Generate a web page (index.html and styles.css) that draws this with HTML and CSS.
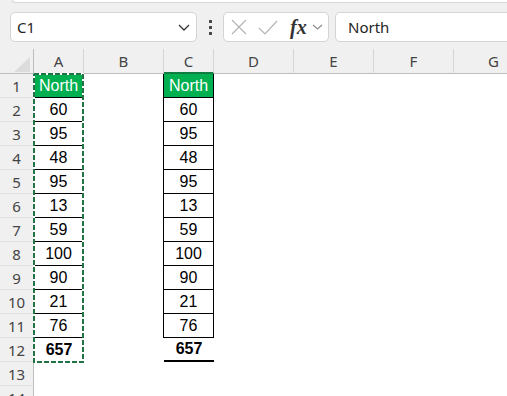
FILE: index.html
```html
<!DOCTYPE html>
<html lang="en">

<head>
  <meta charset="UTF-8" />
  <meta name="viewport" content="width=device-width, initial-scale=1.0" />
  <title>Sheet</title>
  <link rel="stylesheet" href="styles.css">
</head>

<body>

  <div class="ribbon-edge"></div>

  <!-- Name box + formula bar -->
  <div class="formula-bar">
    <div class="name-box">
      <span>C1</span>
      <svg class="chev" width="12" height="7" viewBox="0 0 12 7">
        <polyline points="1,1 6,6 11,1" />
      </svg>
    </div>
    <div class="grip"><i></i><i></i><i></i></div>
    <div class="fx-group">
      <svg class="ic-x" width="16" height="16" viewBox="0 0 16 16">
        <path d="M1 1 L15 15 M15 1 L1 15" />
      </svg>
      <svg class="ic-check" width="20" height="16" viewBox="0 0 20 16">
        <polyline points="1,9 7,15 19,2" />
      </svg>
      <span class="fx">fx</span>
      <svg class="chev small" width="11" height="6" viewBox="0 0 11 6">
        <polyline points="1,1 5.5,5 10,1" />
      </svg>
    </div>
    <div class="formula-input">North</div>
  </div>

  <!-- Worksheet -->
  <div class="sheet" id="sheet">
    <svg class="copy-marquee" width="51" height="290" viewBox="0 0 51 290">
      <rect class="ants-bg" x="1" y="1" width="49" height="288" />
      <rect class="ants" x="1" y="1" width="49" height="288" />
    </svg>
  </div>

  <script>
    const sheet = document.querySelector("#sheet");
    const letters = ["A", "B", "C", "D", "E", "F", "G"];
    const values = [60, 95, 48, 95, 13, 59, 100, 90, 21, 76];
    const total = values.reduce((a, b) => a + b, 0);

    function addCell(cls, text) {
      const el = document.createElement("div");
      el.className = cls;
      if (text !== undefined) el.textContent = text;
      sheet.append(el);
    }

    // header row
    addCell("corner");
    letters.forEach(l => addCell(l == "C" ? "col-head active" : "col-head", l));

    // rows 1..14
    for (let r = 1; r <= 14; r++) {
      addCell("row-head", r);
      letters.forEach(l => {
        if (l != "A" && l != "C") {
          addCell("cell");
        } else if (r == 1) {
          addCell("cell box title", "North");
        } else if (r <= 11) {
          addCell("cell box", values[r - 2]);
        } else if (r == 12) {
          addCell(l == "C" ? "cell total total-line" : "cell total", total);
        } else {
          addCell("cell");
        }
      });
    }
  </script>
</body>

</html>
```

FILE: styles.css
```css
* {
  margin: 0;
  padding: 0;
  box-sizing: border-box;
}

body {
  background-color: #f0f0f0;
  font-family: 'Noto Sans', sans-serif;
  width: 507px;
  height: 396px;
  overflow: hidden;
}

/* bottom edge of the ribbon above */
.ribbon-edge {
  height: 3px;
  margin-left: 12px;
  background: #fff;
  border: 1px solid #d6d6d6;
  border-top: none;
  border-right: none;
  border-radius: 0 0 0 8px;
}

/* Formula bar */
.formula-bar {
  display: flex;
  align-items: center;
  height: 30px;
  margin-top: 9px;
  margin-bottom: 7px;
  padding-left: 10px;
}

.name-box {
  width: 187px;
  height: 30px;
  background: #fff;
  border: 1px solid #d4d4d4;
  border-radius: 5px;
  display: flex;
  align-items: center;
  justify-content: space-between;
  padding: 0 6px 0 6px;
  font-size: 15px;
  color: #242424;
}

.chev polyline {
  fill: none;
  stroke: #333;
  stroke-width: 1.3;
}

.chev.small polyline {
  stroke: #8a8a8a;
  stroke-width: 1.1;
}

.grip {
  width: 26px;
  display: flex;
  flex-direction: column;
  align-items: center;
  gap: 3px;
}

.grip i {
  display: block;
  width: 3px;
  height: 3px;
  background: #4a4a4a;
}

.fx-group {
  width: 106px;
  height: 30px;
  background: #fff;
  border: 1px solid #d4d4d4;
  border-radius: 5px;
  display: flex;
  align-items: center;
  padding-left: 7px;
}

.ic-x path,
.ic-check polyline {
  fill: none;
  stroke: #b4b4b4;
  stroke-width: 1.2;
}

.ic-check {
  margin-left: 11px;
}

.fx {
  margin-left: 12px;
  font-family: 'Liberation Serif', serif;
  font-style: italic;
  font-weight: bold;
  font-size: 20px;
  color: #333;
  line-height: 1;
}

.fx-group .chev {
  margin-left: 5px;
}

.formula-input {
  flex: 1;
  height: 30px;
  margin-left: 6px;
  margin-right: -12px;
  background: #fff;
  border: 1px solid #d4d4d4;
  border-radius: 5px;
  padding-left: 12px;
  display: flex;
  align-items: center;
  font-size: 15px;
  color: #242424;
}

/* Worksheet grid */
.sheet {
  position: relative;
  display: grid;
  grid-template-columns: 34px 50px 80px 50px 80px 80px 80px 80px;
  grid-template-rows: 25px;
  grid-auto-rows: 24px;
  background: #fff;
  height: 347px;
}

.corner {
  position: relative;
  background: #f0f0f0;
  border-right: 1px solid #bdbdbd;
  border-bottom: 1px solid #bdbdbd;
}

.corner::after {
  content: "";
  position: absolute;
  right: 3px;
  bottom: 1px;
  width: 0;
  height: 0;
  border-left: 16px solid transparent;
  border-bottom: 15px solid #dcdcdc;
}

.col-head {
  background: #f0f0f0;
  border-right: 1px solid #d5d5d5;
  border-bottom: 1px solid #bdbdbd;
  display: flex;
  align-items: center;
  justify-content: center;
  font-size: 15px;
  color: #444;
}

.col-head.active {
  border-bottom: 2px solid #107c41;
  padding-top: 1px;
}

.row-head {
  background: #f0f0f0;
  border-right: 1px solid #bdbdbd;
  border-bottom: 1px solid #e0e0e0;
  display: flex;
  align-items: center;
  justify-content: center;
  font-size: 15px;
  color: #444;
}

.cell {
  display: flex;
  align-items: center;
  justify-content: center;
  font-family: 'Liberation Sans', Arial, sans-serif;
  font-size: 16px;
  color: #000;
}

.cell.box {
  border-right: 1px solid #000;
  border-bottom: 1px solid #000;
  box-shadow: -1px 0 0 #000;
}

.cell.title {
  background: #00b050;
  color: #fff;
}

.cell.total {
  font-weight: bold;
}

.cell.total-line {
  border-bottom: 2px solid #000;
}

/* copy marquee around A1:A12 */
.copy-marquee {
  position: absolute;
  left: 33px;
  top: 24px;
}

.ants-bg,
.ants {
  fill: none;
  stroke-width: 2;
}

.ants-bg {
  stroke: #fff;
}

.ants {
  stroke: #217346;
  stroke-dasharray: 5 2;
}
```
